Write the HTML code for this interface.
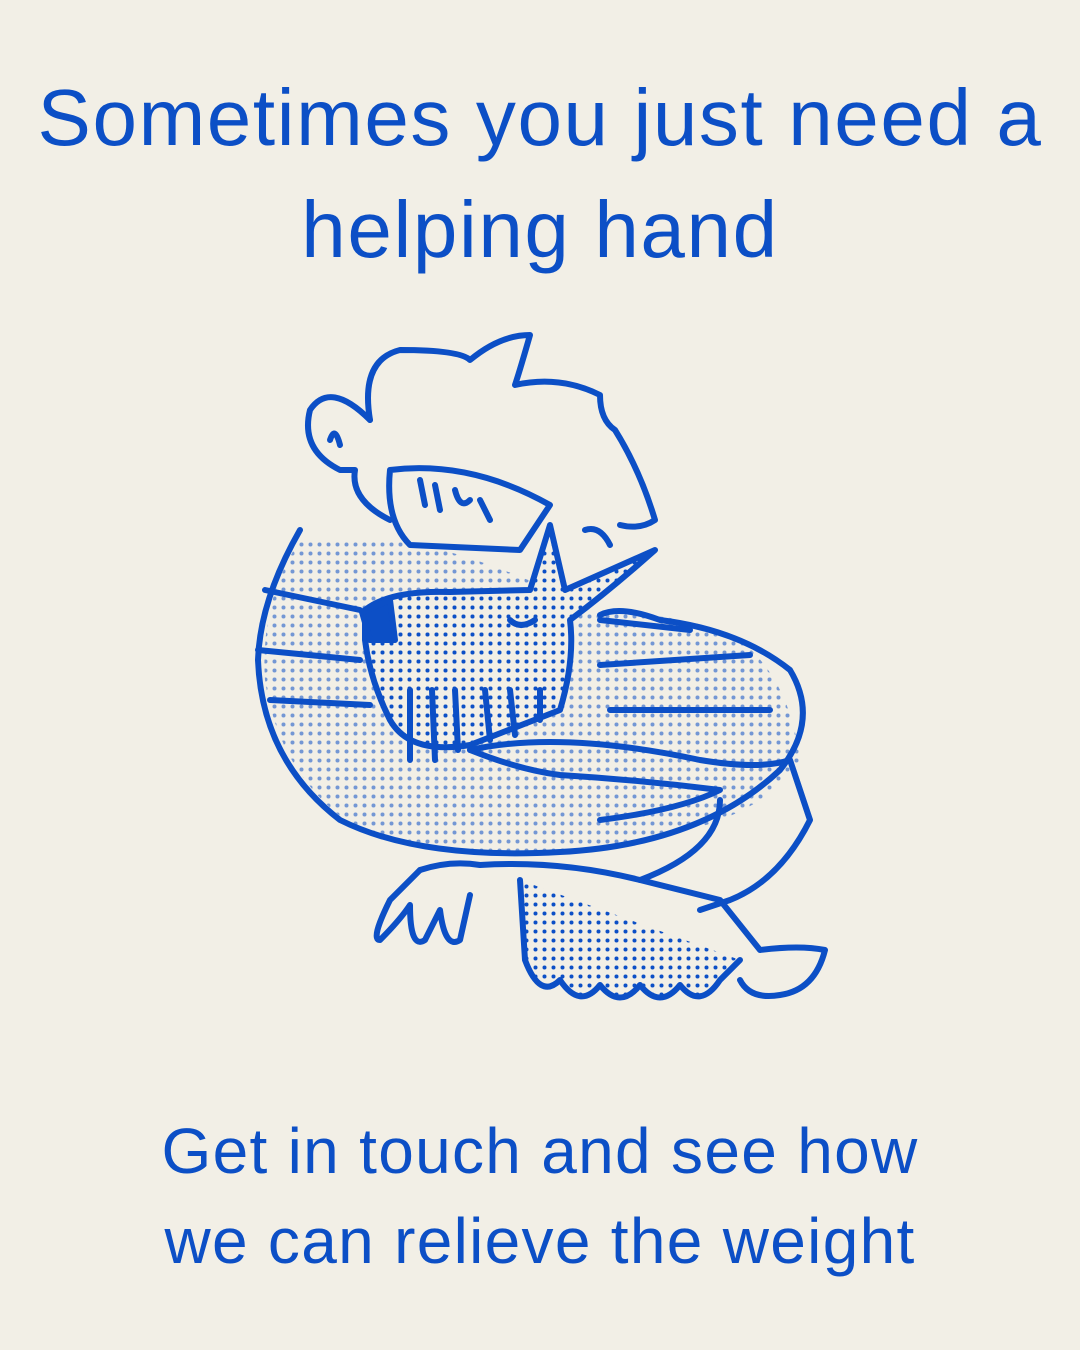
<!DOCTYPE html>
<html><head><meta charset="utf-8"><style>
html,body{margin:0;padding:0}
body{width:1080px;height:1350px;background:#f2efe6;position:relative;overflow:hidden;font-family:"Liberation Sans",sans-serif;color:#0c4fc6}
.t{position:absolute;left:0;width:1080px;text-align:center;white-space:nowrap}
.h{font-size:80px;line-height:112px;top:62px;letter-spacing:1.6px}
.s{font-size:64px;line-height:90px;top:1106px;letter-spacing:1.3px}
svg{position:absolute;left:0;top:0}
</style></head><body>
<div class="t h">Sometimes you just need a<br>helping hand</div>
<svg width="1080" height="1350" viewBox="0 0 1080 1350">
<defs><pattern id="d" width="9" height="9" patternUnits="userSpaceOnUse"><circle cx="4.5" cy="4.5" r="2" fill="#0c4fc6"/></pattern></defs>
<g fill="none" stroke="#0c4fc6" stroke-width="6" stroke-linecap="round" stroke-linejoin="round">
<path d="M300 540 Q260 600 265 680 Q280 780 360 830 Q440 860 560 850 Q700 840 760 800 L800 760 Q790 680 740 640 Q680 610 600 615 Q500 560 400 540 Z" fill="url(#d)" stroke="none" opacity=".55"/>
<path d="M370 420 Q360 360 400 350 Q460 350 470 360 Q500 335 530 335 Q520 370 515 385 Q560 375 600 395 Q600 420 615 430 Q640 470 655 520 Q640 530 620 525"/>
<path d="M370 420 Q330 380 310 410 Q300 450 340 470 L355 470 Q350 500 390 520"/>
<path d="M330 440 Q335 425 340 445"/>
<path d="M390 470 Q385 520 410 545 L520 550 L550 505 Q470 460 390 470Z"/>
<path d="M420 480 L425 505 M435 485 L440 510 M455 490 Q460 510 470 500 M480 500 L490 520"/>
<path d="M585 530 Q600 525 610 545"/>
<path d="M300 530 Q260 600 258 660 Q262 760 340 820 Q420 860 560 852 Q700 845 780 770 Q820 720 790 670 Q740 630 660 620 Q620 605 600 615"/>
<path d="M265 590 L360 610 M258 650 L360 660 M270 700 L370 705 M600 665 L750 655 M610 710 L770 710 M600 620 L690 630"/>
<path d="M365 610 Q390 590 450 592 L530 590 L550 525 L565 590 L655 550 Q610 590 570 620 Q575 660 560 710 L470 745 Q410 755 390 720 Q370 680 365 640Z" fill="url(#d)"/>
<path d="M362 612 L390 600 L395 640 L370 640Z" fill="#0c4fc6"/>
<path d="M510 620 Q520 630 535 620"/>
<path d="M410 690 L410 760 M432 690 L435 760 M455 690 L458 750 M485 690 L490 740 M510 690 L515 735 M540 690 L540 720"/>
<path d="M470 750 Q560 730 700 760 Q760 770 790 760 L810 820 Q780 880 730 900 L700 910"/>
<path d="M470 750 Q520 770 560 775 Q640 780 720 790 Q680 810 600 820"/>
<path d="M420 870 Q450 860 480 865 Q560 860 640 880 L720 900 L760 950 Q800 945 825 950 Q815 990 780 995 Q750 1000 740 980"/>
<path d="M520 880 L525 960 Q540 1000 560 980 Q580 1010 600 985 Q620 1010 640 985 Q660 1010 680 985 Q700 1010 720 980 L740 960" fill="url(#d)"/>
<path d="M420 870 L390 900 Q370 940 380 940 Q400 920 410 905 Q410 950 425 940 L440 910 Q445 950 460 940 L470 895"/>
<path d="M640 880 Q720 850 720 800" fill="none"/>
</g>
</svg>
<div class="t s">Get in touch and see how<br>we can relieve the weight</div>
</body></html>
